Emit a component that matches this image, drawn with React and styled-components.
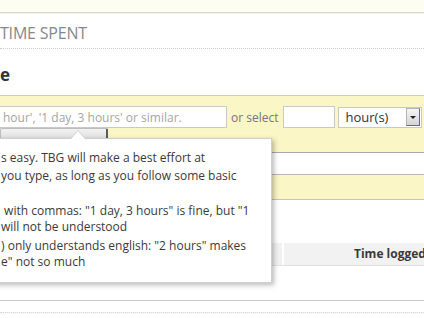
import React from "react";
import styled, { createGlobalStyle } from "styled-components";

const GlobalStyle = createGlobalStyle`
  html, body {
    margin: 0;
    padding: 0;
    background: #ffffff;
  }
  body {
    font-family: "Open Sans", "Liberation Sans", sans-serif;
    color: #333;
    overflow: hidden;
  }
`;

const Page = styled.div`
  position: relative;
  width: 424px;
  height: 318px;
  overflow: hidden;
  background: #ffffff;
`;

const TopBand = styled.div`
  height: 12px;
  background: #fefdf1;
  border-bottom: 1px solid #d6d6d0;
  box-shadow: 0 1px 1px rgba(0, 0, 0, 0.05);
`;

const Title = styled.h2`
  margin: 0;
  padding: 3px 0 0 0;
  height: 32px;
  line-height: 35px;
  font-size: 16px;
  font-weight: normal;
  letter-spacing: -0.2px;
  color: #888;
  border-bottom: 1px dotted #cfcfcf;
`;

const SubSection = styled.div`
  padding: 17px 0 11px;
`;

const SubHeading = styled.h3`
  margin: 0 0 0 -100px;
  width: 110px;
  text-align: right;
  font-size: 17px;
  line-height: 18px;
  font-weight: bold;
  color: #333;
  white-space: nowrap;
`;

const Form = styled.div`
  background: #faf6c5;
  border-top: 1px solid #cdcdc0;
  border-bottom: 1px solid #c6c6b6;
  padding: 10px 0 24px;
`;

const Row = styled.div`
  display: flex;
  align-items: center;
  height: 22px;
`;

const TextInput = styled.input`
  box-sizing: border-box;
  height: 22px;
  width: ${(p) => p.$width}px;
  margin: 0 0 0 ${(p) => p.$offset || 0}px;
  padding: 0 3px;
  border: 1px solid #c9c9c9;
  background: #fff;
  font-family: inherit;
  font-size: 12px;
  color: #333;
  outline: none;
  &::placeholder {
    color: #a5a5a5;
  }
`;

const Muted = styled.span`
  margin: 0 4px;
  font-size: 12px;
  color: #777;
  white-space: nowrap;
`;

const Select = styled.div`
  box-sizing: border-box;
  display: flex;
  align-items: center;
  justify-content: space-between;
  width: 84px;
  height: 21px;
  margin-left: 3px;
  padding-left: 7px;
  border: 1px solid #c9c9c9;
  background: #fff;
  font-size: 13px;
  color: #333;
`;

const SelectArrow = styled.span`
  position: relative;
  box-sizing: border-box;
  width: 14px;
  height: 18px;
  margin-right: 1px;
  background: linear-gradient(#f6f6f6, #d4d4d4);
  border: 1px solid #b5b5b5;
  border-right-color: #6b6b6b;
  border-bottom-color: #6b6b6b;
  &::after {
    content: "";
    position: absolute;
    left: 3px;
    top: 7px;
    border-left: 3px solid transparent;
    border-right: 3px solid transparent;
    border-top: 3px solid #222;
  }
`;

const HelpButton = styled.button`
  display: block;
  box-sizing: border-box;
  width: 108px;
  height: 14px;
  margin: 0;
  padding: 0;
  background: linear-gradient(#f2f2f2, #dcdcdc);
  border: 1px solid #bdbdbd;
  border-right: 2px solid #5c5c5c;
  border-radius: 2px;
  font-family: inherit;
  font-size: 11px;
  line-height: 30px;
  color: #666;
  overflow: hidden;
`;

const CommentField = styled.div`
  box-sizing: border-box;
  height: 23px;
  margin: 10px 0 0 -2px;
  width: 430px;
  background: #fff;
  border-top: 1px solid #a9a9a9;
  border-bottom: 1px solid #b8b8b8;
`;

const Table = styled.div`
  margin-top: 43px;
`;

const HeadRow = styled.div`
  display: flex;
  gap: 2px;
  height: 22px;
  border-bottom: 1px solid #e2e2e2;
`;

const HeadCell = styled.div`
  flex: ${(p) => (p.$width ? `0 0 ${p.$width}px` : "1")};
  background: #f2f2f2;
  padding-left: ${(p) => p.$indent || 0}px;
  font-size: 12px;
  font-weight: bold;
  line-height: 22px;
  color: #3a3a3a;
  white-space: nowrap;
`;

const TableBody = styled.div`
  height: 34px;
`;

const Footer = styled.div`
  border-top: 1px solid #c9c9c9;
  box-shadow: 0 1px 2px rgba(0, 0, 0, 0.08);
  height: 11px;
`;

const DottedRule = styled.div`
  border-top: 1px dotted #d8d8d8;
`;

const Popup = styled.div`
  position: absolute;
  left: -12px;
  top: 138px;
  box-sizing: border-box;
  width: 284px;
  padding: 10px 12px 12px;
  background: #fff;
  border: 1px solid #cfcfcf;
  box-shadow: 2px 2px 5px rgba(0, 0, 0, 0.28);
  font-size: 12px;
  color: #3a3a3a;
  white-space: nowrap;
  &::before {
    content: "";
    position: absolute;
    left: 81px;
    top: -9px;
    border-left: 8px solid transparent;
    border-right: 8px solid transparent;
    border-bottom: 9px solid #cfcfcf;
  }
  &::after {
    content: "";
    position: absolute;
    left: 82px;
    top: -8px;
    border-left: 7px solid transparent;
    border-right: 7px solid transparent;
    border-bottom: 8px solid #fff;
  }
`;

const Para = styled.p`
  margin: 0;
  line-height: 18px;
`;

const Rules = styled.ul`
  margin: 0;
  padding: 0;
  list-style: none;
`;

const Rule = styled.li`
  line-height: 16px;
  & + & {
    margin-top: 3px;
  }
`;

export default function App() {
  return (
    <>
      <GlobalStyle />
      <Page>
        <TopBand />
        <Title>TIME SPENT</Title>
        <SubSection>
          <SubHeading>Time</SubHeading>
        </SubSection>
        <Form>
          <Row>
            <TextInput
              $width={228}
              $offset={-1}
              placeholder="hour', '1 day, 3 hours' or similar."
            />
            <Muted>or select</Muted>
            <TextInput $width={52} />
            <Select>
              hour(s)
              <SelectArrow />
            </Select>
          </Row>
          <HelpButton>How does this work?</HelpButton>
          <CommentField />
        </Form>
        <Table>
          <HeadRow>
            <HeadCell $width={282} />
            <HeadCell $indent={70}>Time logged</HeadCell>
          </HeadRow>
          <TableBody />
        </Table>
        <Footer />
        <DottedRule />
        <Popup>
          <Para>
            s easy. TBG will make a best effort at
            <br />
            you type, as long as you follow some basic
            <br />
            &nbsp;
          </Para>
          <Rules>
            <Rule>
              &nbsp;with commas: "1 day, 3 hours" is fine, but "1
              <br />
              will not be understood
            </Rule>
            <Rule>
              ) only understands english: "2 hours" makes
              <br />
              e" not so much
            </Rule>
          </Rules>
        </Popup>
      </Page>
    </>
  );
}
